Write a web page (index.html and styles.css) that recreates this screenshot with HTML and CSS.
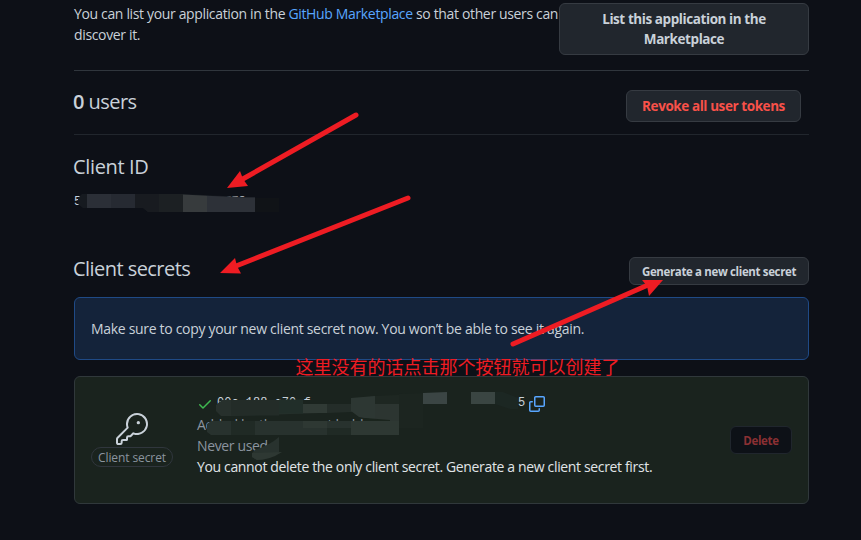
FILE: index.html
```html
<!DOCTYPE html>
<html lang="en">
<head>
<meta charset="utf-8">
<title>OAuth application settings</title>
<link rel="stylesheet" href="styles.css">
</head>
<body>
<main class="page">
  <section class="listing">
    <p class="listing-text">You can list your application in the <a href="#">GitHub Marketplace</a> so that other users can<br>discover it.</p>
    <button class="btn btn-list">List this application in the<br>Marketplace</button>
  </section>
  <section class="users">
    <h2><b>0</b> users</h2>
    <button class="btn btn-revoke">Revoke all user tokens</button>
  </section>
  <section class="client-id">
    <h2>Client ID</h2>
    <div class="id-row"><code>5</code><code class="id-end">f78</code></div>
  </section>
  <section class="secrets-head">
    <h2>Client secrets</h2>
    <button class="btn btn-small">Generate a new client secret</button>
  </section>
  <div class="flash"><span>Make sure to copy your new client secret now. You won’t be able to see it again.</span></div>
  <section class="secret">
    <div class="kind">
      <svg class="key" width="32" height="32" viewBox="0 0 24 24" fill="#c9d1d9"><path d="M16.75 8.5a1.25 1.25 0 100-2.5 1.25 1.25 0 000 2.5z"/><path fill-rule="evenodd" d="M15.75 0a8.25 8.25 0 00-7.851 10.79L.513 18.178A1.75 1.75 0 000 19.414v2.836C0 23.217.784 24 1.75 24h1.5A1.75 1.75 0 005 22.25v-1a.25.25 0 01.25-.25h2.735a.75.75 0 00.545-.22l.214-.213A.875.875 0 009 19.948V18.5a.25.25 0 01.25-.25h1.086c.464 0 .91-.184 1.237-.513l1.636-1.636A8.25 8.25 0 1015.75 0zM9 8.25a6.75 6.75 0 114.288 6.287.75.75 0 00-.804.168l-1.971 1.972a.25.25 0 01-.177.073H9.25A1.75 1.75 0 007.5 18.5v1H5.25a1.75 1.75 0 00-1.75 1.75v1a.25.25 0 01-.25.25h-1.5a.25.25 0 01-.25-.25v-2.836a.25.25 0 01.073-.177l7.722-7.721a.75.75 0 00.168-.804A6.73 6.73 0 019 8.25z"/></svg>
      <span class="label">Client secret</span>
    </div>
    <div class="details">
      <div class="hash">
        <svg width="16" height="16" viewBox="0 0 16 16" fill="#3fb950"><path d="M13.78 4.22a.75.75 0 010 1.06l-7.25 7.25a.75.75 0 01-1.06 0L2.22 9.28a.75.75 0 011.06-1.06L6 10.94l6.72-6.72a.75.75 0 011.06 0z"/></svg>
        <code class="hash-start">00c 188 c70 f</code><code>5</code>
        <svg class="copy" width="16" height="16" viewBox="0 0 16 16" fill="#58a6ff"><path d="M0 6.75C0 5.784.784 5 1.75 5h1.5a.75.75 0 010 1.5h-1.5a.25.25 0 00-.25.25v7.5c0 .138.112.25.25.25h7.5a.25.25 0 00.25-.25v-1.5a.75.75 0 011.5 0v1.5A1.75 1.75 0 019.25 16h-7.5A1.75 1.75 0 010 14.25z"/><path fill-rule="evenodd" d="M5 1.75C5 .784 5.784 0 6.75 0h7.5C15.216 0 16 .784 16 1.75v7.5A1.75 1.75 0 0114.25 11h-7.5A1.75 1.75 0 015 9.25zm1.75-.25a.25.25 0 00-.25.25v7.5c0 .138.112.25.25.25h7.5a.25.25 0 00.25-.25v-7.5a.25.25 0 00-.25-.25z"/></svg>
      </div>
      <div class="muted">Added by the account holder</div>
      <div class="muted">Never used</div>
      <div class="notice">You cannot delete the only client secret. Generate a new client secret first.</div>
    </div>
    <button class="btn btn-small btn-delete">Delete</button>
  </section>
</main>
<svg class="overlay" width="861" height="540" viewBox="0 0 861 540">
  <!-- redaction over the client id -->
  <path fill="#161a20" d="M82 194H183L245 197H255V212H148L143 208H83L78 204V198Z"/>
  <path fill="#2b2f37" d="M87 194h24v14H87z"/><path fill="#262a32" d="M111 194h24v14h-24z"/>
  <path fill="#181b20" d="M135 194h24v18h-11l-5-4h-8z"/><path fill="#1c2023" d="M159 194h24v18h-24z"/>
  <path fill="#373b3d" d="M183 194.5l24 1.2V212h-24z"/><path fill="#2d3138" d="M207 195.7l38 1.8h10V212h-48z"/>
  <path fill="#101317" d="M255 198h24v14h-24z"/>
  <!-- redaction over the secret and its metadata -->
  <path fill="#1c2520" d="M399 394l24-1v35h-24z"/>
  <path fill="#27302c" d="M222 400H351L375 396V411L351 412L230 416L221 416L216 411V405Z"/>
  <path fill="#232c28" d="M231 400h48v15.500h-48z"/><path fill="#212e29" d="M279 399.500h24v14h-24z"/>
  <path fill="#303a35" d="M303 404h24v9h-24z"/><path fill="#1a231e" d="M303 400h48v4h-48z"/><path fill="#242d29" d="M327 404h24v8h-24z"/>
  <path fill="#2d3733" d="M351 398l24-2v24l-16-3-8-6z"/>
  <path fill="#2c3531" d="M375 404h24v31h-24z"/><path fill="#27302c" d="M375 396l24-1v9h-24z" opacity=".35"/><path fill="#1a241d" d="M365 418l25 2v1h-25z"/>
  <path fill="#28322e" d="M211 421H375V435H211L207 432V424Z"/>
  <path fill="#202a25" d="M231 421h24v14h-24zM327 428h24v7h-24z"/><path fill="#2e3833" d="M303 421h24v7h-24zM351 421h48v14h-48z"/>
  <path fill="#28322e" d="M255 450Q270 445 279 437V452Q267 460 257 460L252 457V453Z"/>
  <path fill="#2e3833" d="M252 453L282 452Q270 460 257 460L252 457Z"/>
  <path fill="#3b4544" d="M423 393l24-1v12h-24z"/><path fill="#1c2723" d="M495 392h8l15 6v11h-8l-15-5z"/><path fill="#3a4542" d="M471 392h24v12h-24z"/>
  <!-- arrows -->
  <g stroke="#ee1c23" stroke-width="5" stroke-linecap="round" fill="#ee1c23">
    <path d="M356 115L241 180M408 198L236 266M513 344L648 285"/>
    <g stroke="none"><path d="M227 188L240 171L243 179L248 186Z"/><path d="M220 273L235 258L237 266L241 273.5Z"/><path d="M663 280L642 280L647 286L649 296Z"/></g>
  </g>
</svg>
<div class="note" lang="zh-CN">这里没有的话点击那个按钮就可以创建了</div>
</body>
</html>
```
FILE: styles.css
```css
* { box-sizing: border-box; }
body { margin: 0; width: 861px; height: 540px; overflow: hidden; position: relative; background: #0d1017; color: #c9d1d9; font: 14px/21px "Open Sans", "Noto Sans", sans-serif; letter-spacing: -0.35px; }
.page { width: 735px; margin-left: 74px; padding-top: 3px; white-space: nowrap; }
h2, p { margin: 0; }
h2 { font-size: 20px; line-height: 30px; font-weight: 400; letter-spacing: -0.55px; text-indent: -1px; }
b { font-weight: 600; }
a { color: #58a6ff; text-decoration: none; }
code { font: 12px/21px "Liberation Mono", monospace; letter-spacing: 0; }
.btn { font: 700 13.5px/20px "Open Sans", sans-serif; letter-spacing: -0.42px; color: #c9d1d9; background: #21262d; border: 1px solid #363b42; border-radius: 6px; padding: 0; white-space: nowrap; }
.listing { height: 68px; display: flex; justify-content: space-between; border-bottom: 1px solid #30363d; }
.listing-text { width: 485px; }
.btn-list { width: 250px; height: 52px; }
.users { height: 64px; padding-right: 8px; display: flex; align-items: center; justify-content: space-between; border-bottom: 1px solid #21262d; }
.users h2 { margin-top: -1px; }
.btn-revoke { width: 175px; height: 32px; color: #f85149; margin-top: 7px; }
.client-id { height: 122px; padding-top: 17px; }
.client-id h2 { letter-spacing: -0.35px; }
.id-row { padding-top: 7px; line-height: 21px; }
.client-id .id-end { margin-left: 143px; }
.secrets-head { height: 28px; display: flex; align-items: center; justify-content: space-between; }
.secrets-head h2 { margin-top: -4px; }
.btn-small { height: 28px; width: 180px; font-size: 11.5px; letter-spacing: -0.36px; padding-top: 1px; }
.flash { height: 63px; margin-top: 12px; padding: 0 0 0 16px; display: flex; align-items: center; background: #14233a; border: 1px solid #1f4a86; border-radius: 6px; letter-spacing: -0.31px; }
.secret { height: 128px; margin-top: 16px; padding: 0 16px; display: flex; align-items: center; background: #1a231e; border: 1px solid #30383b; border-radius: 6px; }
.kind { width: 82px; display: flex; flex-direction: column; align-items: center; }
.label { width: 82px; height: 20px; margin-top: 2px; border: 1px solid #30363d; border-radius: 10px; text-align: center; font-size: 12px; line-height: 19px; letter-spacing: -0.1px; color: #8b949e; font-weight: 500; }
.details { margin: -10px 0 0 24px; flex: 1; }
.hash { display: flex; align-items: center; height: 21px; }
.hash-start { width: 302px; margin-left: 3px; text-indent: 1px; }
.copy { margin-left: 4px; }
.muted { color: #8b949e; }
.notice { color: #e0e5e8; }
.btn-delete { width: 62px; background: #0d1117; border-color: #20262d; color: #8b3033; letter-spacing: -0.3px; }
.overlay { position: absolute; left: 0; top: 0; }
.note { position: absolute; left: 295.5px; top: 353px; font: 18px/26px "Noto Sans CJK SC", sans-serif; letter-spacing: 0; color: #ee1c23; white-space: nowrap; }
```
